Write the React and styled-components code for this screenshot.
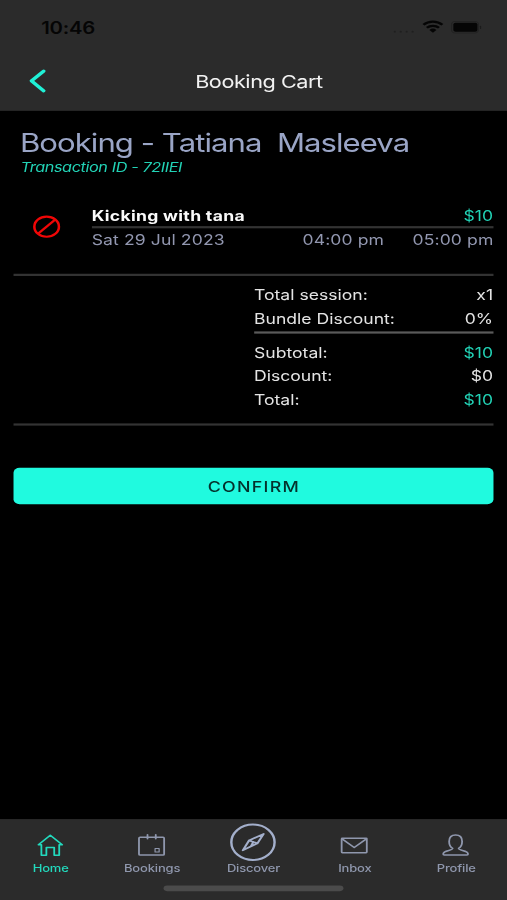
import React from 'react';
import styled, { createGlobalStyle } from 'styled-components';

const GlobalStyle = createGlobalStyle`
  body {
    margin: 0;
    background-color: #000;
  }
  * {
    box-sizing: border-box;
  }
`

const Frame = styled.div`
  width: 507px;
  height: 900px;
  overflow: hidden;
  background-color: #000;
`

// 375x812 phone screen stretched to fill the frame
const Screen = styled.div`
  width: 375px;
  height: 812px;
  display: grid;
  grid-template-rows: 99.6px 639.8px 72.6px;
  transform: scale(1.352, 1.10837);
  transform-origin: 0 0;
  color: #e4e4e4;
  font-family: Inter, "Liberation Sans", sans-serif;
  font-size: 13px;
  white-space: pre;
`

const Header = styled.header`
  background-color: #2b2b2b;
`

const StatusBar = styled.div`
  height: 50px;
  padding: 0 18.9px 0 30.5px;
  display: flex;
  align-items: center;
  justify-content: space-between;
  color: #050505;
`

const Clock = styled.span`
  padding-top: 1.6px;
  font-size: 15px;
  font-weight: 600;
  line-height: 20px;
  letter-spacing: -0.15px;
`

const StatusIcons = styled.div`
  display: flex;
  align-items: center;
`

const NavBar = styled.div`
  height: 46px;
  display: grid;
  grid-template-columns: 60px 1fr 60px;
  align-items: center;
`

const BackButton = styled.button`
  display: flex;
  padding: 0 0 0 21px;
  border: none;
  background: none;
`

const NavTitle = styled.h1`
  margin: 0;
  padding-left: 8px;
  text-align: center;
  font-size: 16px;
  font-weight: 400;
  line-height: 22px;
  color: #f2f2f2;
  letter-spacing: -0.33px;
`

const Content = styled.main`
  padding: 15.9px 9.6px 0 10.2px;
`

const BookingTitle = styled.h2`
  margin: 0 0 0 4.6px;
  font-size: 23px;
  font-weight: 400;
  line-height: 28px;
  letter-spacing: -0.71px;
  color: #9aa5c6;
`

const TransactionId = styled.p`
  margin: 0 0 0 5px;
  font-size: 12px;
  font-style: italic;
  line-height: 15.4px;
  letter-spacing: -0.29px;
  color: #22d3b6;
`

const Session = styled.section`
  height: 89.8px;
  padding-top: 24.3px;
  display: grid;
  grid-template-columns: 57.6px 1fr;
  border-bottom: 2px solid #333;
`

const CancelIcon = styled.svg`
  margin: 10.9px 0 0 13.8px;
`

const SessionHead = styled.div`
  display: flex;
  justify-content: space-between;
  height: 22.4px;
  line-height: 22.8px;
  border-bottom: 2px solid #333;
`

const SessionName = styled.span`
  color: #fafafa;
  font-weight: 700;
  letter-spacing: 0.22px;
`

const Price = styled.span`
  color: ${props => props.$accent ? '#22d3b6' : '#e4e4e4'};
  padding-right: 0.7px;
`

const SessionTimes = styled.div`
  display: grid;
  grid-template-columns: 1fr auto auto;
  column-gap: 21px;
  padding-right: 0.4px;
  line-height: 21.2px;
  letter-spacing: 0.08px;
  color: #9297b0;
`

const Summary = styled.section`
  height: 135.2px;
  padding: 7.6px 0 0 177.7px;
  border-bottom: 2px solid #333;
`

const SummaryRow = styled.div`
  display: flex;
  justify-content: space-between;
  line-height: 21.1px;
`

const SummaryDivider = styled.div`
  height: 2px;
  margin: 0.7px 0 6.6px;
  background-color: #5a5a5a;
`

const ConfirmButton = styled.button`
  display: block;
  width: 100%;
  height: 33.6px;
  margin-top: 38px;
  padding: 0;
  border: none;
  border-radius: 4.5px;
  background-color: #20fadf;
  color: #04312c;
  font-family: inherit;
  font-size: 13.2px;
  font-weight: 500;
  letter-spacing: 0.95px;
`

const TabBar = styled.nav`
  background-color: #2b2b2b;
`

const Tabs = styled.div`
  height: 60px;
  display: grid;
  grid-template-columns: repeat(5, 1fr);
`

const Tab = styled.a`
  display: flex;
  flex-direction: column;
  align-items: center;
  color: ${props => props.$active ? '#22d9bd' : '#8f97ad'};
  font-size: 9.6px;
  font-weight: 500;
  line-height: 12px;
  letter-spacing: -0.12px;
`

const TabIcon = styled.svg`
  width: 36px;
  height: 36px;
  margin: 3px 0.2px -0.6px 0;
  fill: none;
  stroke: currentColor;
  stroke-width: 1.35;
  stroke-linejoin: round;
  stroke-linecap: round;
`

const HomeIndicator = styled.div`
  width: 133.5px;
  height: 5px;
  margin: 0 auto;
  border-radius: 3px;
  background-color: #4b4b4b;
`

const tabs = [
  {
    label: 'Home',
    active: true,
    icon: <path d="M9.4 20.2 18.2 11.6 27 20.2H24.8V29.6H21.1V22.6H15.3V29.6H11.6V20.2Z" />
  },
  {
    label: 'Bookings',
    icon: <>
      <rect x="8.8" y="13.4" width="18.6" height="16.1" rx="0.8" />
      <path d="M15.1 11.2V14.8M21.2 11.2V14.8" />
      <rect x="20.7" y="23.6" width="3" height="3.2" strokeWidth="0.9" />
    </>
  },
  {
    label: 'Discover',
    icon: <g stroke="#a3afcb">
      <circle cx="18.1" cy="17.9" r="16" strokeWidth="1.8" />
      <path d="M10.6 25.2 15.2 16.3 26 10.4 21.4 18.9ZM15.2 16.3 21.4 18.9M18.3 17.7 16.6 21.6" strokeWidth="1.6" />
    </g>
  },
  {
    label: 'Inbox',
    icon: <>
      <rect x="8.7" y="14.4" width="18.6" height="12.9" rx="0.5" />
      <path d="M9 14.8 18 22.6 27 14.8" />
    </>
  },
  {
    label: 'Profile',
    icon: <path d="M15.8 23.4C14 22.2 13.2 20 13.2 17.2C13.2 13.2 15.1 11.4 18 11.4S22.8 13.2 22.8 17.2C22.8 20 22 22.2 20.2 23.4C20.2 25.7 27.2 24.9 27.2 28.6C27.2 29.2 26.9 29.5 26.4 29.5H9.6C9.1 29.5 8.8 29.2 8.8 28.6C8.8 24.9 15.8 25.7 15.8 23.4Z" />
  }
]

const charges = [
  { label: 'Total session:', value: 'x1' },
  { label: 'Bundle Discount:', value: '0%' }
]

const totals = [
  { label: 'Subtotal:', value: '$10', accent: true },
  { label: 'Discount:', value: '$0' },
  { label: 'Total:', value: '$10', accent: true }
]

const renderRow = (row) => (
  <SummaryRow key={row.label}>
    <span>{row.label}</span>
    <Price $accent={row.accent}>{row.value}</Price>
  </SummaryRow>
)

class App extends React.Component {
  render() {
    return (
      <Frame>
        <GlobalStyle />
        <Screen>
          <Header>
            <StatusBar>
              <Clock>10:46</Clock>
              <StatusIcons>
                <svg width="66" height="14" viewBox="0 0 66 14" fill="currentColor">
                  <g fill="#1f1f1f">
                    <circle cx="2" cy="10.6" r="0.8" />
                    <circle cx="6.4" cy="10.6" r="0.8" />
                    <circle cx="10.8" cy="10.6" r="0.8" />
                    <circle cx="15.2" cy="10.6" r="0.8" />
                  </g>
                  <g fill="none" stroke="currentColor" strokeWidth="2">
                    <path d="M23.2 4.4A9.8 9.8 0 0 1 37.2 4.4" />
                    <path d="M25.7 7.1A6.4 6.4 0 0 1 34.7 7.1" />
                  </g>
                  <path d="M30.2 11.6 27.6 9A3.7 3.7 0 0 1 32.8 9Z" />
                  <rect x="44" y="1.5" width="19.8" height="10.2" rx="2.6" fill="none" stroke="#222" strokeWidth="0.9" />
                  <rect x="45.3" y="2.5" width="17.8" height="8.2" rx="1.6" />
                  <rect x="65" y="5.2" width="1" height="3" rx="0.5" fill="#1b1b1b" />
                </svg>
              </StatusIcons>
            </StatusBar>
            <NavBar>
              <BackButton aria-label="Back">
                <svg width="14" height="22" viewBox="0 0 14 22" fill="none" stroke="#20f0d6" strokeWidth="2.8" strokeLinecap="round" strokeLinejoin="round">
                  <path d="M11.3 2.1 2.3 11 11.3 19.9" />
                </svg>
              </BackButton>
              <NavTitle>Booking Cart</NavTitle>
            </NavBar>
          </Header>

          <Content>
            <BookingTitle>{'Booking - Tatiana  Masleeva'}</BookingTitle>
            <TransactionId>Transaction ID - 72IIEI</TransactionId>

            <Session>
              <CancelIcon width="21" height="21" viewBox="0 0 21 21" fill="none" stroke="#f00606" strokeWidth="1.9">
                <circle cx="10.5" cy="10.5" r="9.1" />
                <path d="M4.1 16.9 16.9 4.1" />
              </CancelIcon>
              <div>
                <SessionHead>
                  <SessionName>Kicking with tana</SessionName>
                  <Price $accent>$10</Price>
                </SessionHead>
                <SessionTimes>
                  <span>Sat 29 Jul 2023</span>
                  <span>04:00 pm</span>
                  <span>05:00 pm</span>
                </SessionTimes>
              </div>
            </Session>

            <Summary>
              {charges.map(renderRow)}
              <SummaryDivider />
              {totals.map(renderRow)}
            </Summary>

            <ConfirmButton>CONFIRM</ConfirmButton>
          </Content>

          <TabBar>
            <Tabs>
              {tabs.map(tab => (
                <Tab key={tab.label} $active={tab.active}>
                  <TabIcon viewBox="0 0 36 36">{tab.icon}</TabIcon>
                  {tab.label}
                </Tab>
              ))}
            </Tabs>
            <HomeIndicator />
          </TabBar>
        </Screen>
      </Frame>
    );
  }
}

export default App;
